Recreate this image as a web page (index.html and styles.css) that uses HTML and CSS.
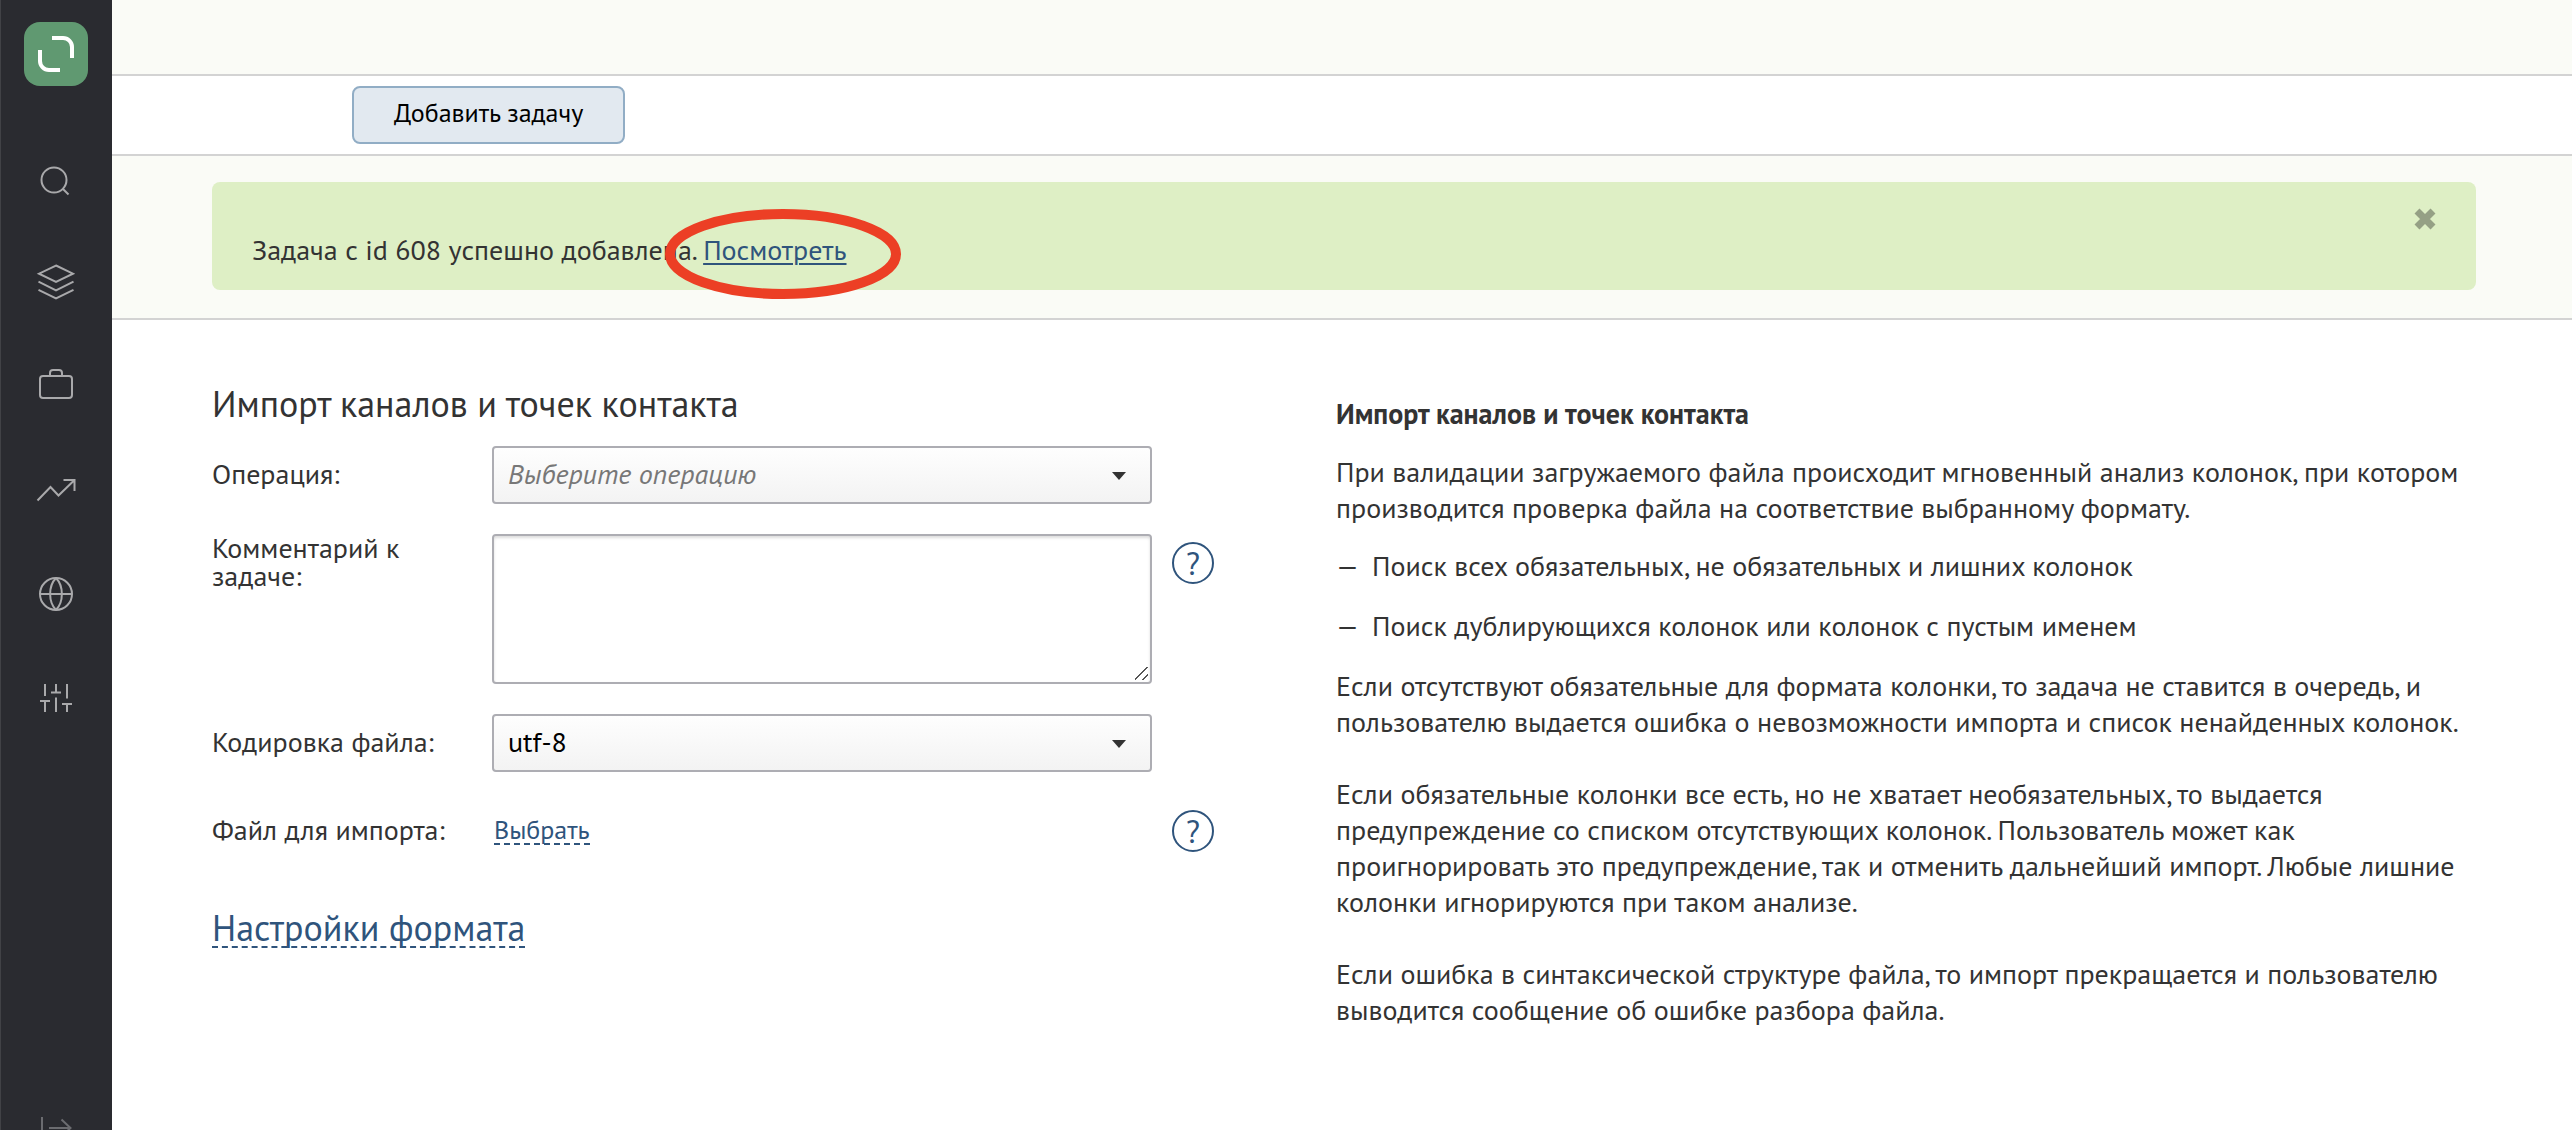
FILE: index.html
```html
<!DOCTYPE html>
<html lang="ru">
<head>
<meta charset="utf-8">
<meta name="viewport" content="width=device-width, initial-scale=1">
<title>Импорт каналов и точек контакта</title>
<link rel="stylesheet" href="styles.css">
</head>
<body>
<div class="app">
  <aside class="sidebar">
    <a class="logo" href="#" aria-label="Главная">
      <svg viewBox="0 0 64 64" aria-hidden="true"><path d="M28 16H39A9 9 0 0 1 48 25V36M16 28V39A9 9 0 0 0 25 48H36"/></svg>
    </a>
    <nav class="nav">
      <a class="nav-item" href="#" aria-label="Поиск">
        <svg viewBox="0 0 48 48" aria-hidden="true"><circle cx="22" cy="26" r="12.5"/><path d="M31 35l5.500 5.500"/></svg>
      </a>
      <a class="nav-item" href="#" aria-label="Слои">
        <svg viewBox="0 0 48 48" aria-hidden="true"><path d="M24 7.500L41 15.700 24 24 7 15.700ZM6.500 23.700L24 32.300 41.500 23.700M6.500 31.800L24 40.500 41.500 31.800"/></svg>
      </a>
      <a class="nav-item" href="#" aria-label="Проекты">
        <svg viewBox="0 0 48 48" aria-hidden="true"><rect x="8" y="14" width="32" height="22" rx="3"/><path d="M18 14V11A3 3 0 0 1 21 8H27A3 3 0 0 1 30 11V14"/></svg>
      </a>
      <a class="nav-item" href="#" aria-label="Отчёты">
        <svg viewBox="0 0 48 48" aria-hidden="true"><path d="M5.500 34.500L18.500 21 26.500 29.500 42 14.500M31.500 14H42.500V25"/></svg>
      </a>
      <a class="nav-item" href="#" aria-label="Сайты">
        <svg viewBox="0 0 48 48" aria-hidden="true"><circle cx="24" cy="24" r="16"/><path d="M8 24H40M24 8C16.200 16 16.200 32 24 40M24 8C31.800 16 31.800 32 24 40"/></svg>
      </a>
      <a class="nav-item" href="#" aria-label="Настройки">
        <svg viewBox="0 0 48 48" aria-hidden="true"><path d="M13 10V22M8 27H18M13 27V38M24 10V18.500M19 18.500H29M24 23.500V38M35 10V24.500M30 30H40M35 30V38"/></svg>
      </a>
    </nav>
    <button class="exit" type="button" aria-label="Развернуть меню">
      <svg viewBox="0 0 48 48" aria-hidden="true"><path d="M10 11V33M17 22H38M29.500 13.500L38.500 22 29.500 30.500"/></svg>
    </button>
  </aside>

  <main class="main">
    <header class="topbar"></header>
    <div class="toolbar">
      <button class="button" type="button">Добавить задачу</button>
    </div>
    <section class="notices">
      <div class="alert" role="status">
        <p class="alert-text">Задача с id 608 успешно добавлена. <span class="marked"><a class="alert-link" href="#">Посмотреть</a><svg class="marker" viewBox="0 0 236 90" aria-hidden="true"><ellipse cx="118" cy="45" rx="113" ry="40"/></svg></span></p>
        <button class="alert-close" type="button" aria-label="Закрыть">
          <svg viewBox="0 0 22 22" aria-hidden="true"><path d="M3 3L19 19M19 3L3 19"/></svg>
        </button>
      </div>
    </section>

    <div class="content">
      <form class="form">
        <h1 class="form-title">Импорт каналов и точек контакта</h1>
        <div class="row">
          <label class="label" for="operation">Операция:</label>
          <div class="select">
            <select class="field placeholder" id="operation"><option>Выберите операцию</option></select>
          </div>
        </div>
        <div class="row row-top">
          <label class="label" for="comment">Комментарий к задаче:</label>
          <textarea class="field textarea" id="comment"></textarea>
          <button class="help" type="button" aria-label="Справка о комментарии">?</button>
        </div>
        <div class="row">
          <label class="label" for="encoding">Кодировка файла:</label>
          <div class="select">
            <select class="field" id="encoding"><option>utf-8</option></select>
          </div>
        </div>
        <div class="row row-file">
          <span class="label">Файл для импорта:</span>
          <div class="file"><a class="dashed" href="#">Выбрать</a></div>
          <button class="help" type="button" aria-label="Справка о файле">?</button>
        </div>
        <h2 class="format"><a class="dashed" href="#">Настройки формата</a></h2>
      </form>

      <article class="guide">
        <h2 class="guide-title">Импорт каналов и точек контакта</h2>
        <p>При валидации загружаемого файла происходит мгновенный анализ колонок, при котором производится проверка файла на соответствие выбранному формату.</p>
        <ul class="checks">
          <li>Поиск всех обязательных, не обязательных и лишних колонок</li>
          <li>Поиск дублирующихся колонок или колонок с пустым именем</li>
        </ul>
        <p>Если отсутствуют обязательные для формата колонки, то задача не ставится в очередь, и пользователю выдается ошибка о невозможности импорта и список ненайденных колонок.</p>
        <p>Если обязательные колонки все есть, но не хватает необязательных, то выдается предупреждение со списком отсутствующих колонок. Пользователь может как проигнорировать это предупреждение, так и отменить дальнейший импорт. Любые лишние колонки игнорируются при таком анализе.</p>
        <p>Если ошибка в синтаксической структуре файла, то импорт прекращается и пользователю выводится сообщение об ошибке разбора файла.</p>
      </article>
    </div>
  </main>
</div>
</body>
</html>
```
FILE: styles.css
```css
* {
  box-sizing: border-box;
}

body {
  margin: 0;
  background: #fff;
  color: #333;
  font-family: "PT Sans", "Noto Sans", sans-serif;
  font-size: 28px;
  line-height: 36px;
}

button,
select,
textarea {
  font: inherit;
}

svg {
  display: block;
  fill: none;
}

h1,
h2,
p,
ul {
  margin: 0;
  padding: 0;
}

.app {
  display: flex;
  align-items: flex-start;
}

/* Sidebar */
.sidebar {
  position: sticky;
  top: 0;
  display: flex;
  flex: none;
  flex-direction: column;
  align-items: center;
  width: 112px;
  height: 100vh;
  padding-top: 22px;
  overflow: hidden;
  background: #2a2b30;
  box-shadow: inset 1px 0 #414246;
}

.logo {
  width: 64px;
  height: 64px;
  border-radius: 16px;
  background: #609971;
}

.logo svg {
  stroke: #fff;
  stroke-width: 4;
}

.nav {
  display: flex;
  flex-direction: column;
  margin-top: 40px;
}

.nav-item {
  display: flex;
  align-items: center;
  height: 104px;
}

.nav-item svg,
.exit svg {
  width: 48px;
  height: 48px;
  stroke: #a9a9ab;
  stroke-width: 2;
}

.exit {
  flex: none;
  height: 24px;
  margin-top: auto;
  padding: 0;
  overflow: hidden;
  border: 0;
  background: none;
}

.exit svg {
  stroke: #6b6c70;
}

/* Header bars */
.main {
  flex: 1;
  min-width: 0;
}

.topbar {
  height: 76px;
  border-bottom: 2px solid #d3d3d3;
  background: #fafbf6;
}

.toolbar {
  display: flex;
  padding: 10px 240px;
  border-bottom: 2px solid #d3d3d3;
}

.button {
  height: 58px;
  padding: 0 40px 4px;
  border: 2px solid #91adc5;
  border-radius: 8px;
  background: #e2e9f0;
  color: #000;
  font-size: 26px;
}

.notices {
  padding: 26px 96px 28px 100px;
  border-bottom: 2px solid #d3d3d3;
  background: #fafbf6;
}

.alert {
  display: flex;
  align-items: flex-start;
  justify-content: space-between;
  padding: 26px 40px 20px;
  border-radius: 8px;
  background: #deefc5;
}

.alert-text {
  padding: 24px 0 2px;
}

.alert-link {
  color: #2f547c;
  text-decoration-thickness: 2px;
  text-underline-offset: 3px;
}

.marked {
  position: relative;
}

.marker {
  position: absolute;
  top: -22px;
  left: -38px;
  width: 236px;
  height: 90px;
  stroke: #ec3f25;
  stroke-width: 10;
  pointer-events: none;
}

.alert-close {
  width: 22px;
  height: 22px;
  padding: 0;
  border: 0;
  background: none;
}

.alert-close svg {
  stroke: #95a085;
  stroke-width: 7;
}

/* Content */
.content {
  display: grid;
  grid-template-columns: 281fr 285fr;
  padding: 60px 96px 80px 100px;
}

.form {
  display: flex;
  flex-direction: column;
  gap: 30px;
}

.form-title,
.format {
  font-size: 36px;
  font-weight: 400;
  line-height: 48px;
}

.form-title {
  margin-bottom: -12px;
}

.format {
  margin-top: 14px;
}

.row {
  display: grid;
  grid-template-columns: 260px minmax(0, 660px) 42px;
  column-gap: 20px;
  align-items: center;
}

.row-top {
  align-items: start;
}

.row-file {
  min-height: 58px;
}

.label {
  padding-bottom: 2px;
  line-height: 28px;
}

.field {
  display: block;
  width: 100%;
  border: 2px solid #adadb3;
  border-radius: 4px;
}

select.field {
  height: 58px;
  padding: 0 48px 2px 14px;
  appearance: none;
  background: linear-gradient(#fefefe, #f3f3f3);
  color: #000;
}

select.placeholder {
  color: #777;
  font-style: italic;
}

.select {
  position: relative;
}

.select::after {
  content: "";
  position: absolute;
  top: 26px;
  right: 26px;
  border: solid transparent;
  border-width: 8px 7px 0;
  border-top-color: #333;
  pointer-events: none;
}

.textarea {
  height: 150px;
  padding: 10px 14px;
  box-shadow: inset 0 2px 3px #ddd;
}

.textarea::-webkit-resizer {
  background: linear-gradient(135deg, transparent 46%, #555 46% 53%, transparent 53% 74%, #555 74% 81%, transparent 81%) 0 0 / 13px 13px no-repeat;
}

.help {
  width: 42px;
  height: 42px;
  padding: 0;
  border: 2px solid #2f547c;
  border-radius: 50%;
  background: none;
  color: #2f547c;
  font-size: 32px;
}

.row-top .help {
  margin-top: 8px;
}

.file {
  padding: 0 2px 2px;
  font-size: 26px;
}

.dashed {
  display: inline-block;
  border-bottom: 2px dashed #2f547c;
  color: #2f547c;
  line-height: 1;
  text-decoration: none;
}

.guide {
  display: flex;
  flex-direction: column;
  gap: 36px;
  padding-top: 16px;
}

.guide-title {
  margin-bottom: -14px;
  font-size: 28px;
  font-weight: 700;
  line-height: 36px;
}

.checks {
  display: flex;
  flex-direction: column;
  gap: 24px;
  margin: -14px 0 -12px;
  list-style: none;
}

.checks li {
  display: flex;
}

.checks li::before {
  content: "—";
  flex: none;
  width: 36px;
}
```
